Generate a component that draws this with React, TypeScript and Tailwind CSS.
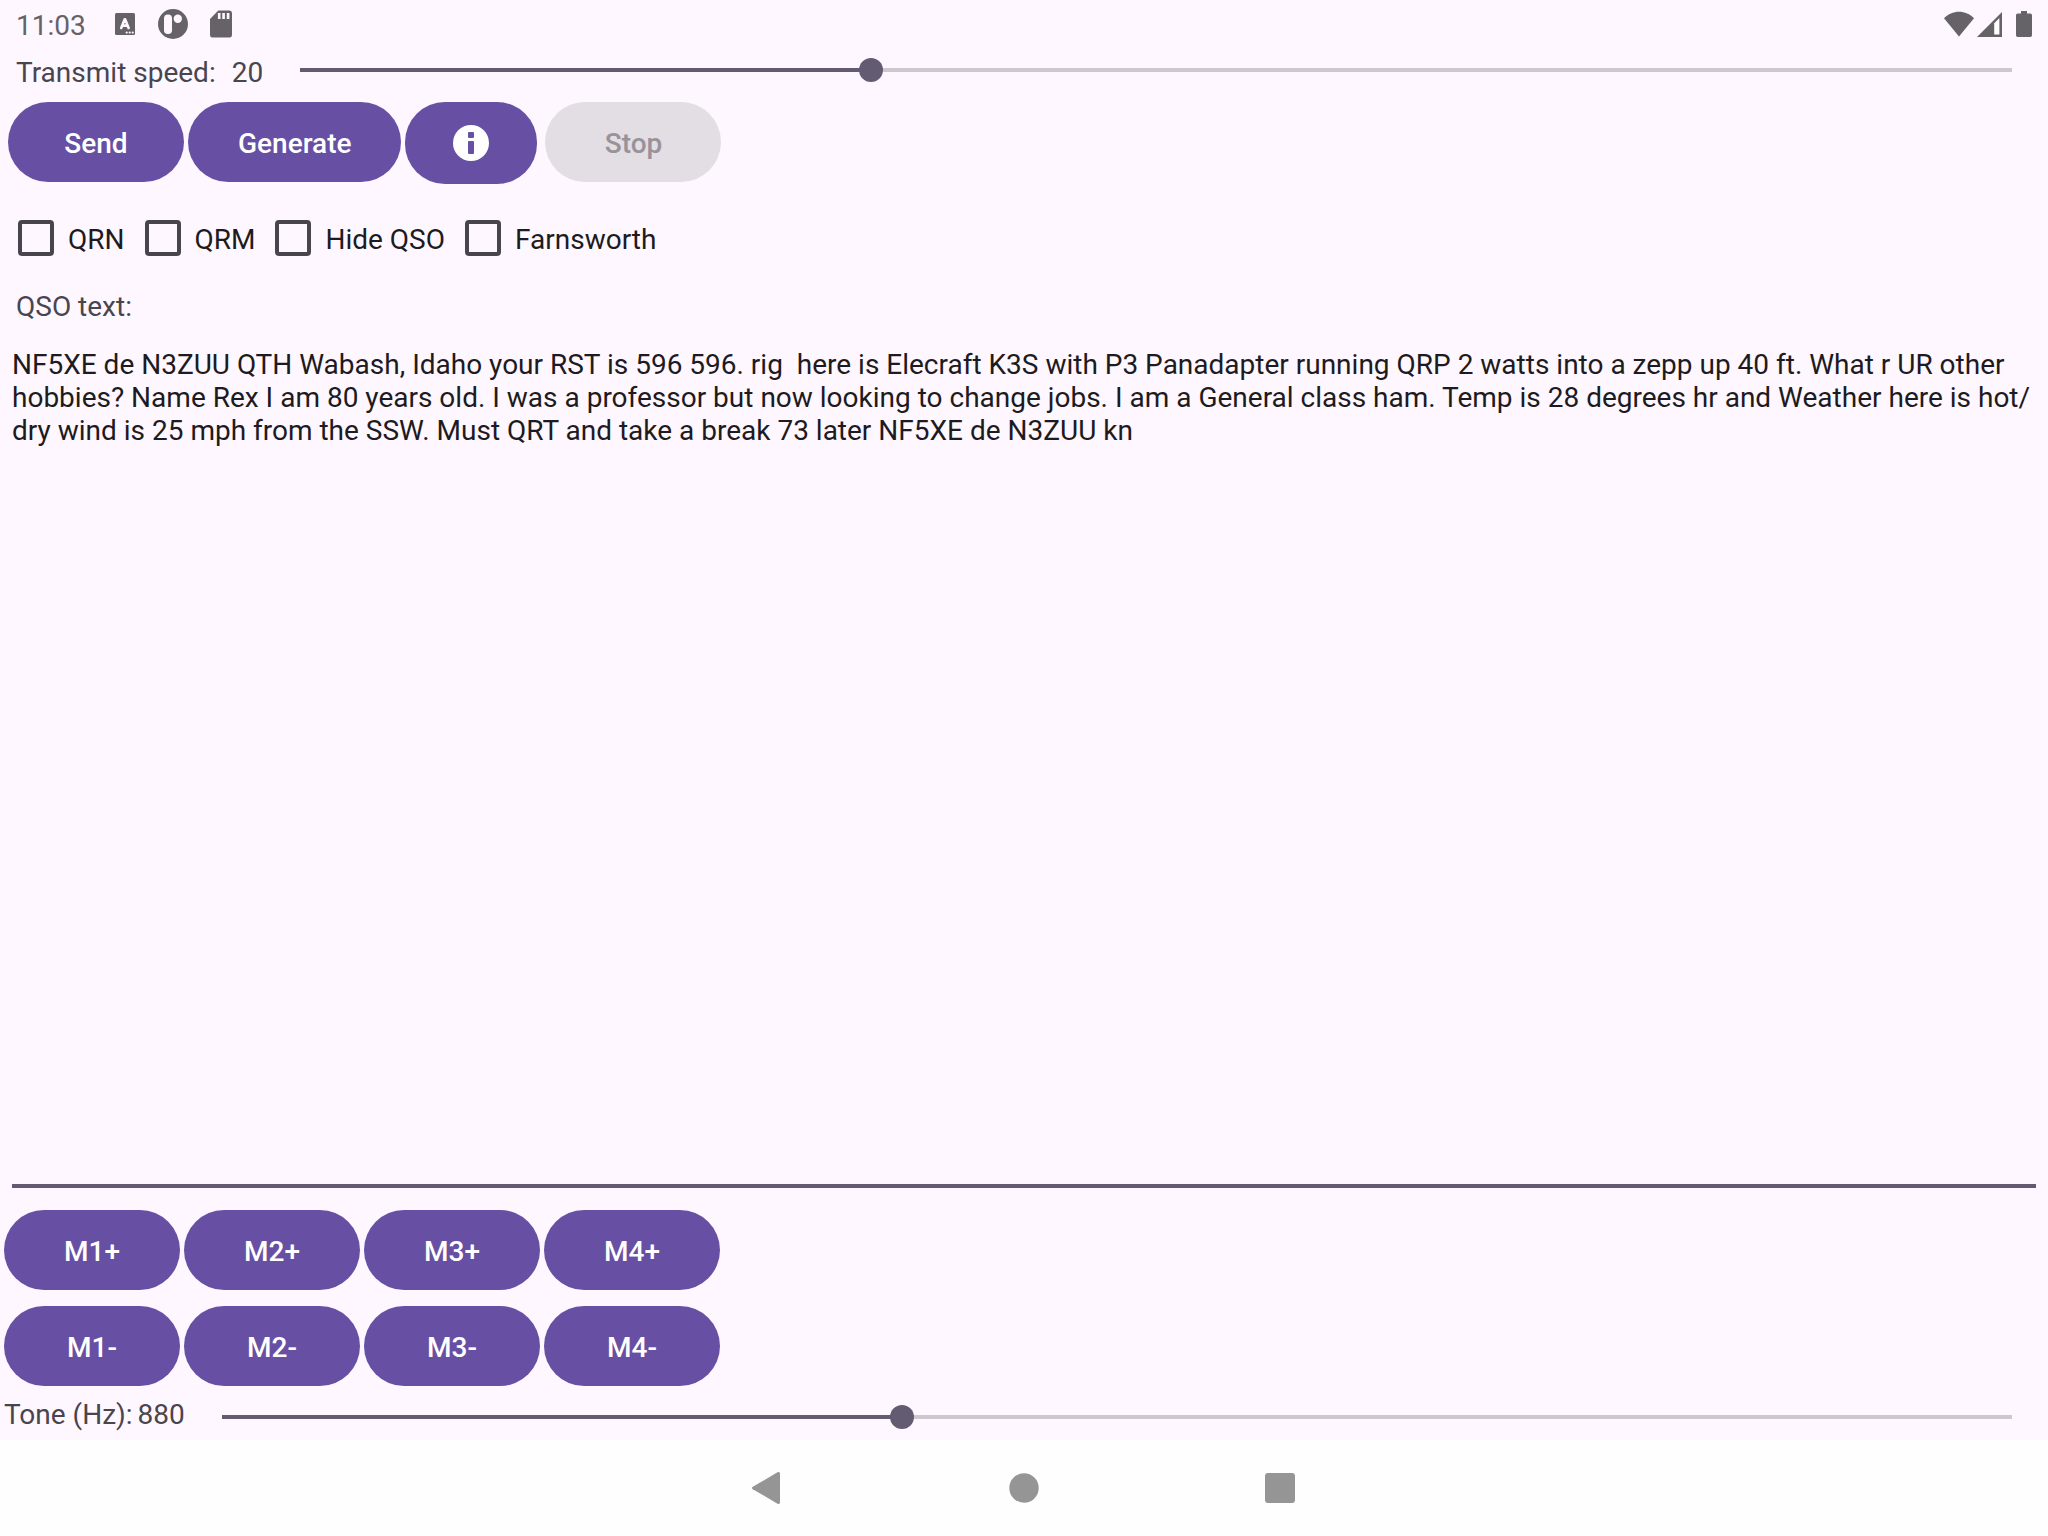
import { useState } from "react";

// The zero-width space lets the line break after the slash.
const QSO =
  "NF5XE de N3ZUU QTH Wabash, Idaho your RST is 596 596. rig  here is Elecraft K3S with P3 Panadapter running QRP 2 watts into a zepp up 40 ft. What r UR other hobbies? Name Rex I am 80 years old. I was a professor but now looking to change jobs. I am a General class ham. Temp is 28 degrees hr and Weather here is hot/\u200bdry wind is 25 mph from the SSW. Must QRT and take a break 73 later NF5XE de N3ZUU kn";

function StatusBar() {
  return (
    <header className="flex h-12 items-center justify-between pl-4 pr-4 text-[#666368]">
      <div className="flex items-center">
        <span className="w-[99px] pt-[2px]">11:03</span>
        <svg width="20" height="22" viewBox="0 0 20 22" aria-hidden="true">
          <rect width="20" height="22" rx="1.5" fill="currentColor" />
          <path
            d="M6.2 15 L9.6 6.4 H10.2 L13.6 15 M7.6 12.6 H12.2"
            fill="none"
            stroke="#fef7ff"
            strokeWidth="2.6"
            strokeLinecap="round"
            strokeLinejoin="round"
          />
          <g fill="#fef7ff">
            <circle cx="11.7" cy="19.6" r="1.1" />
            <circle cx="14.7" cy="19.6" r="1.1" />
            <circle cx="17.7" cy="19.6" r="1.1" />
          </g>
        </svg>
        <svg className="ml-[23px]" width="30" height="30" viewBox="0 0 30 30" aria-hidden="true">
          <circle cx="15" cy="15" r="15" fill="currentColor" />
          <rect x="6" y="5.5" width="8" height="19.5" rx="3.8" fill="#fef7ff" />
          <circle cx="19.8" cy="9.8" r="4.2" fill="#fef7ff" />
        </svg>
        <svg className="ml-[22px]" width="22" height="28" viewBox="0 0 22 28" aria-hidden="true">
          <path
            d="M8.3 0.5 H19.6 Q22 0.5 22 3 V25 Q22 27.5 19.6 27.5 H2.4 Q0 27.5 0 25 V9 Z"
            fill="currentColor"
          />
          <path d="M9.2 3 V9 M13.6 3 V9 M18.1 3 V9" stroke="#fef7ff" strokeWidth="2.6" />
        </svg>
      </div>
      <div className="flex items-center">
        <svg width="30" height="26" viewBox="0 0 30 26" aria-hidden="true">
          <path d="M15 25.5 L0 7.3 C8 -1.6 22 -1.6 30 7.3 Z" fill="currentColor" />
        </svg>
        <svg className="ml-[3px]" width="25" height="26" viewBox="0 0 25 26" aria-hidden="true">
          <path d="M25 1 V26 H0 Z" fill="currentColor" />
          <path d="M22.4 7 L17.2 12.2 V23.4 H22.4 Z" fill="#ffffff" />
        </svg>
        <svg className="ml-[14px]" width="16" height="26" viewBox="0 0 16 26" aria-hidden="true">
          <path
            d="M5 0 H11 V2.6 H14.3 Q16 2.6 16 4.3 V24.3 Q16 26 14.3 26 H1.7 Q0 26 0 24.3 V4.3 Q0 2.6 1.7 2.6 H5 Z"
            fill="currentColor"
          />
        </svg>
      </div>
    </header>
  );
}

type SliderProps = {
  id: string;
  min: number;
  max: number;
  value: number;
  onChange: (value: number) => void;
};

function Slider({ id, min, max, value, onChange }: SliderProps) {
  const percent = ((value - min) / (max - min)) * 100;
  return (
    <div className="grid flex-1 items-center">
      <div className="col-start-1 row-start-1 mx-3 h-1 bg-[#cdc8cf]">
        <div className="h-1 bg-[#625b71]" style={{ width: `${percent}%` }} />
      </div>
      <input
        id={id}
        type="range"
        min={min}
        max={max}
        value={value}
        onChange={(e) => onChange(Number(e.target.value))}
        className="col-start-1 row-start-1 h-6 w-full appearance-none bg-transparent [&::-webkit-slider-thumb]:size-6 [&::-webkit-slider-thumb]:appearance-none [&::-webkit-slider-thumb]:rounded-full [&::-webkit-slider-thumb]:bg-[#625b71]"
      />
    </div>
  );
}

const BUTTON = "h-20 min-w-44 rounded-full bg-[#6750a4] px-[50px] pt-[2px] font-medium text-white";

function Check({ label }: { label: string }) {
  return (
    <label className="flex items-center gap-[14px]">
      <input
        type="checkbox"
        className="size-9 appearance-none rounded-[4px] border-4 border-[#49454f] checked:bg-[#6750a4]"
      />
      <span className="pt-[3px]">{label}</span>
    </label>
  );
}

export default function App() {
  const [speed, setSpeed] = useState(20);
  const [tone, setTone] = useState(880);
  const [text, setText] = useState(QSO);

  return (
    <div className="flex min-h-screen flex-col bg-[#fef7ff] font-['Roboto',sans-serif] text-[28px] leading-[33px] text-[#1d1b20]">
      <StatusBar />

      <main className="flex flex-1 flex-col">
        <div className="flex h-11 items-center pr-6">
          <div className="flex w-[288px] gap-4 pt-1 pl-4 text-[#49454f]">
            <label htmlFor="speed">Transmit speed:</label>
            <output htmlFor="speed">{speed}</output>
          </div>
          <Slider id="speed" min={5} max={50} value={speed} onChange={setSpeed} />
        </div>

        <div className="flex items-start gap-1 px-2 pt-[10px]">
          <button type="button" className={BUTTON}>Send</button>
          <button type="button" className={BUTTON}>Generate</button>
          <button
            type="button"
            aria-label="Information"
            className="mr-1 flex h-[82px] items-center rounded-[40px] bg-[#6750a4] px-12"
          >
            <svg width="36" height="36" viewBox="0 0 36 36" aria-hidden="true">
              <circle cx="18" cy="18" r="18" fill="#ffffff" />
              <rect x="15" y="7" width="6" height="6" rx="1" fill="#6750a4" />
              <rect x="15" y="16" width="6" height="13" rx="1" fill="#6750a4" />
            </svg>
          </button>
          <button
            type="button"
            disabled
            className="h-20 min-w-44 rounded-full bg-[#e3dde4] px-[50px] pt-[2px] font-medium text-[#98939a]"
          >
            Stop
          </button>
        </div>

        <div className="flex gap-5 px-[18px] pt-9">
          <Check label="QRN" />
          <Check label="QRM" />
          <Check label="Hide QSO" />
          <Check label="Farnsworth" />
        </div>

        <label htmlFor="qso" className="px-4 pt-[34px] text-[#49454f]">
          QSO text:
        </label>
        <div className="flex flex-1 flex-col px-3 pt-[25px]">
          <textarea
            id="qso"
            spellCheck={false}
            value={text}
            onChange={(e) => setText(e.target.value)}
            className="w-full flex-1 resize-none border-b-4 border-[#625b71] bg-transparent outline-none"
          />
        </div>

        <div className="flex flex-col gap-4 px-1 pt-[22px]">
          {["+", "-"].map((sign) => (
            <div key={sign} className="flex gap-1">
              {[1, 2, 3, 4].map((n) => (
                <button key={n} type="button" className={BUTTON}>
                  {`M${n}${sign}`}
                </button>
              ))}
            </div>
          ))}
        </div>

        <div className="flex h-[54px] items-center pt-2 pr-6">
          <div className="flex w-[210px] gap-[5px] pb-[6px] pl-1 text-[#49454f]">
            <label htmlFor="tone">Tone (Hz):</label>
            <output htmlFor="tone">{tone}</output>
          </div>
          <Slider id="tone" min={500} max={1500} value={tone} onChange={setTone} />
        </div>
      </main>

      <nav className="flex h-24 items-center justify-center gap-[220px] bg-[#fefefe] text-[#959595]">
        <button type="button" aria-label="Back">
          <svg width="36" height="36" viewBox="0 0 36 36" aria-hidden="true">
            <path
              d="M2.8 16.8 L27.5 2.3 Q30 1.2 30 4 V32 Q30 34.8 27.5 33.7 L2.8 19.2 Q1 18 2.8 16.8 Z"
              fill="currentColor"
            />
          </svg>
        </button>
        <button type="button" aria-label="Home">
          <svg width="36" height="36" viewBox="0 0 36 36" aria-hidden="true">
            <circle cx="18" cy="18" r="14.7" fill="currentColor" />
          </svg>
        </button>
        <button type="button" aria-label="Recent apps">
          <svg width="36" height="36" viewBox="0 0 36 36" aria-hidden="true">
            <rect x="3" y="3" width="30" height="30" rx="3" fill="currentColor" />
          </svg>
        </button>
      </nav>
    </div>
  );
}
